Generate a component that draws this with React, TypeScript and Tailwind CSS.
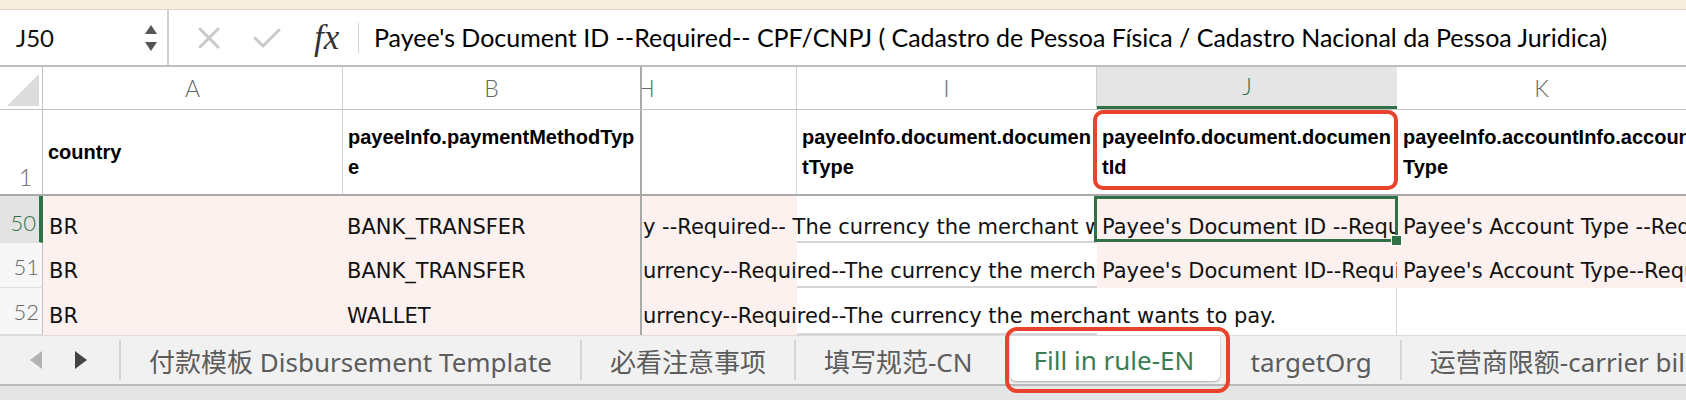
import React from 'react'

const cellFont = "font-['DejaVu_Sans','Noto_Sans_CJK_SC',sans-serif]"
const tabFont = "font-['Noto_Sans','Noto_Sans_CJK_SC',sans-serif]"
const calibri = "font-['Lato','Liberation_Sans',sans-serif]"

function SpinArrows() {
  return (
    <svg width="14" height="30" viewBox="0 0 14 30">
      <path d="M7 2 L13 11 L1 11 Z" fill="#555" />
      <path d="M7 28 L13 19 L1 19 Z" fill="#555" />
    </svg>
  )
}

function CrossIcon() {
  return (
    <svg width="22" height="22" viewBox="0 0 22 22">
      <path d="M2 2 L20 20 M20 2 L2 20" stroke="#c9c9c9" strokeWidth="3" strokeLinecap="round" />
    </svg>
  )
}

function CheckIcon() {
  return (
    <svg width="28" height="22" viewBox="0 0 28 22">
      <path d="M2 11 L10 19 L26 3" stroke="#c9c9c9" strokeWidth="3" fill="none" strokeLinecap="round" strokeLinejoin="round" />
    </svg>
  )
}

function FormulaBar() {
  return (
    <div className="h-[57px] flex items-center bg-white border-b-2 border-[#bdbdbd]">
      <div className="w-[169px] h-full flex items-center justify-between pl-[16px] pr-[9px] border-r-2 border-[#d2d2d2]">
        <span className={`${calibri} text-[24px] text-[#111]`}>J50</span>
        <SpinArrows />
      </div>
      <div className="w-[189px] h-full flex items-center pl-[29px]">
        <CrossIcon />
        <div className="ml-[33px]">
          <CheckIcon />
        </div>
        <span className="ml-[33px] font-['Liberation_Serif',serif] italic text-[35px] text-[#333] leading-none">fx</span>
      </div>
      <div className="w-px h-[30px] bg-[#d6d6d6]" />
      <div className={`${calibri} pl-[15px] text-[25px] text-black whitespace-nowrap`}>
        Payee's Document ID --Required-- CPF/CNPJ ( Cadastro de Pessoa Física / Cadastro Nacional da Pessoa Juridica)
      </div>
    </div>
  )
}

function HeaderRow() {
  const letter = `${calibri} font-light text-[23px] text-[#666]`
  return (
    <div className="h-[43px] flex border-b border-[#c3c3c3] bg-white">
      <div className="w-[43px] shrink-0 border-r border-[#c3c3c3] flex items-end justify-end p-[3px]">
        <svg width="32" height="32" viewBox="0 0 32 32">
          <path d="M32 0 L32 32 L0 32 Z" fill="#dcdcdc" />
        </svg>
      </div>
      <div className={`w-[300px] shrink-0 border-r border-[#d0d0d0] flex items-center justify-center ${letter}`}>A</div>
      <div className={`w-[299px] shrink-0 border-r-2 border-[#a9a9a9] flex items-center justify-center ${letter}`}>B</div>
      <div className="w-[155px] shrink-0 border-r border-[#d0d0d0] flex justify-end overflow-hidden">
        <div className={`w-[300px] shrink-0 flex items-center justify-center ${letter}`}>H</div>
      </div>
      <div className={`w-[300px] shrink-0 border-r border-[#d0d0d0] flex items-center justify-center ${letter}`}>I</div>
      <div className={`w-[300px] shrink-0 bg-[#e5e5e5] border-b-[3px] border-[#2f7047] flex items-center justify-center ${calibri} font-light text-[23px] text-[#2f7047]`}>J</div>
      <div className={`w-[289px] shrink-0 flex items-center justify-center ${letter}`}>K</div>
    </div>
  )
}

function Bold2({ a, b }: { a: string; b?: string }) {
  return (
    <div className="font-['Liberation_Sans',sans-serif] font-bold text-[20px] leading-[30px] text-black whitespace-nowrap">
      <div>{a}</div>
      {b && <div>{b}</div>}
    </div>
  )
}

function TitleRow() {
  return (
    <div className="h-[84px] flex bg-white">
      <div className={`w-[43px] shrink-0 border-r border-[#c3c3c3] flex items-end pl-[19px] ${calibri} font-light text-[23px] text-[#666]`}>1</div>
      <div className="w-[300px] shrink-0 border-r border-[#d6d6d6] flex items-center pl-[5px]">
        <Bold2 a="country" />
      </div>
      <div className="w-[299px] shrink-0 border-r-2 border-[#a9a9a9] flex items-center pl-[5px]">
        <Bold2 a="payeeInfo.paymentMethodTyp" b="e" />
      </div>
      <div className="w-[155px] shrink-0 border-r border-[#d6d6d6]" />
      <div className="w-[300px] shrink-0 flex items-center pl-[5px] overflow-hidden">
        <Bold2 a="payeeInfo.document.documen" b="tType" />
      </div>
      <div className="w-[300px] shrink-0 relative flex items-center pl-[5px]">
        <Bold2 a="payeeInfo.document.documen" b="tId" />
        <div className="absolute left-[-4px] right-[-1px] top-0 bottom-[4px] border-[4px] border-[#e8432d] rounded-[10px] z-20" />
      </div>
      <div className="w-[289px] shrink-0 flex items-center pl-[6px] overflow-hidden">
        <Bold2 a="payeeInfo.accountInfo.account" b="Type" />
      </div>
    </div>
  )
}

const spill = [
  'y --Required-- The currency the merchant wants to pay.',
  'urrency--Required--The currency the merchant wants to pay.',
  'urrency--Required--The currency the merchant wants to pay.',
]

function DataRow({ n, idx, method, h, pb }: { n: number; idx: number; method: string; h: string; pb: string }) {
  const active = idx === 0
  const last = idx === 2
  const text = `${cellFont} text-[21px] text-[#111] leading-[26px] whitespace-nowrap`
  return (
    <div className={`${h} flex`}>
      <div
        className={`w-[43px] shrink-0 flex items-end justify-end pr-[3px] ${pb} border-b border-[#dedede] ${
          active ? 'bg-[#e3e3e3] border-r-[4px] border-r-[#2f7047]' : 'bg-[#f7f7f7] border-r border-r-[#c3c3c3]'
        } ${calibri} font-light text-[22px] ${active ? 'text-[#2f7047]' : 'text-[#666]'}`}
      >
        {n}
      </div>
      <div className={`w-[300px] shrink-0 bg-[#fcf1ef] flex items-end pl-[6px] ${pb} ${text}`}>BR</div>
      <div className={`w-[299px] shrink-0 bg-[#fcf1ef] border-r-2 border-[#a9a9a9] flex items-end pl-[4px] ${pb} ${text}`}>{method}</div>
      <div className="w-[155px] shrink-0 bg-[#fcf1ef] relative">
        <div className={`absolute left-[1px] top-0 bottom-0 z-10 overflow-hidden flex items-end ${pb} ${last ? 'w-[755px]' : 'w-[454px]'} ${text}`}>
          {spill[idx]}
        </div>
      </div>
      <div className="w-[300px] shrink-0 bg-white border-b-2 border-[#d6d6d6]" />
      {last ? (
        <div className="w-[300px] shrink-0 bg-white border-r border-[#d6d6d6]" />
      ) : (
        <div className={`w-[300px] shrink-0 bg-[#fcf1ef] relative flex items-end pl-[5px] ${pb} ${text}`}>
          <div className="overflow-hidden w-full">
            {active ? "Payee's Document ID --Required-- CPF/CNPJ" : "Payee's Document ID--Required--CPF/CNPJ"}
          </div>
          {active && (
            <div className="absolute left-[-3px] top-0 right-[-1px] bottom-[1px] border-[3px] border-[#2f7047] z-10">
              <div className="absolute right-[-7px] bottom-[-7px] w-[11px] h-[11px] bg-[#2f7047] border border-white" />
            </div>
          )}
        </div>
      )}
      <div className={`w-[289px] shrink-0 flex items-end pl-[6px] ${pb} overflow-hidden ${last ? 'bg-white' : 'bg-[#fcf1ef]'} ${text}`}>
        {last ? '' : active ? "Payee's Account Type --Required--" : "Payee's Account Type--Required--"}
      </div>
    </div>
  )
}

function Arrow({ dir, color }: { dir: 'l' | 'r'; color: string }) {
  return (
    <svg width="14" height="20" viewBox="0 0 14 20">
      <path d={dir === 'l' ? 'M13 1 L13 19 L1 10 Z' : 'M1 1 L1 19 L13 10 Z'} fill={color} />
    </svg>
  )
}

function Sep() {
  return <div className="w-[2px] h-[40px] bg-[#d6d6d6] shrink-0" />
}

function TabBar() {
  const tab = `${tabFont} text-[26px] text-[#5c5c5c] whitespace-nowrap shrink-0 px-[28px] pt-[4px]`
  return (
    <div className="h-[51px] flex items-center bg-[#f1f1f1] border-t border-[#dcdcdc] border-b-2 border-b-[#b8b8b8]">
      <div className="w-[119px] shrink-0 flex items-center pl-[29px] gap-[31px]">
        <Arrow dir="l" color="#b3b3b3" />
        <Arrow dir="r" color="#454545" />
      </div>
      <Sep />
      <div className={tab}>付款模板 Disbursement Template</div>
      <Sep />
      <div className={tab}>必看注意事项</div>
      <Sep />
      <div className={tab}>填写规范-CN</div>
      <div className="relative self-start h-[45px] w-[210px] ml-[9px] bg-white rounded-b-[6px] shadow-[0_1px_2px_rgba(0,0,0,0.3)] flex items-center pl-[24px] pt-[4px] shrink-0">
        <span className={`${tabFont} text-[26px] text-[#3b7d52] whitespace-nowrap`}>Fill in rule-EN</span>
        <div className="absolute left-[-5px] right-[-10px] top-[-9px] bottom-[-12px] border-[4px] border-[#e8432d] rounded-[12px] z-20" />
      </div>
      <div className={`${tab} ml-[3px]`}>targetOrg</div>
      <Sep />
      <div className={tab}>运营商限额-carrier bil</div>
    </div>
  )
}

export default function App() {
  return (
    <div className="w-[1686px] h-[400px] overflow-hidden bg-white flex flex-col">
      <div className="h-[10px] shrink-0 bg-[#f6efdf] border-b border-[#ddd5c2]" />
      <FormulaBar />
      <HeaderRow />
      <TitleRow />
      <div className="h-[2px] shrink-0 bg-[#a9a9a9]" />
      <DataRow n={50} idx={0} method="BANK_TRANSFER" h="h-[47px]" pb="pb-[3px]" />
      <DataRow n={51} idx={1} method="BANK_TRANSFER" h="h-[45px]" pb="pb-[4px]" />
      <DataRow n={52} idx={2} method="WALLET" h="h-[47px]" pb="pb-[6px]" />
      <TabBar />
      <div className="flex-1 bg-[#e5e5e5]" />
    </div>
  )
}
